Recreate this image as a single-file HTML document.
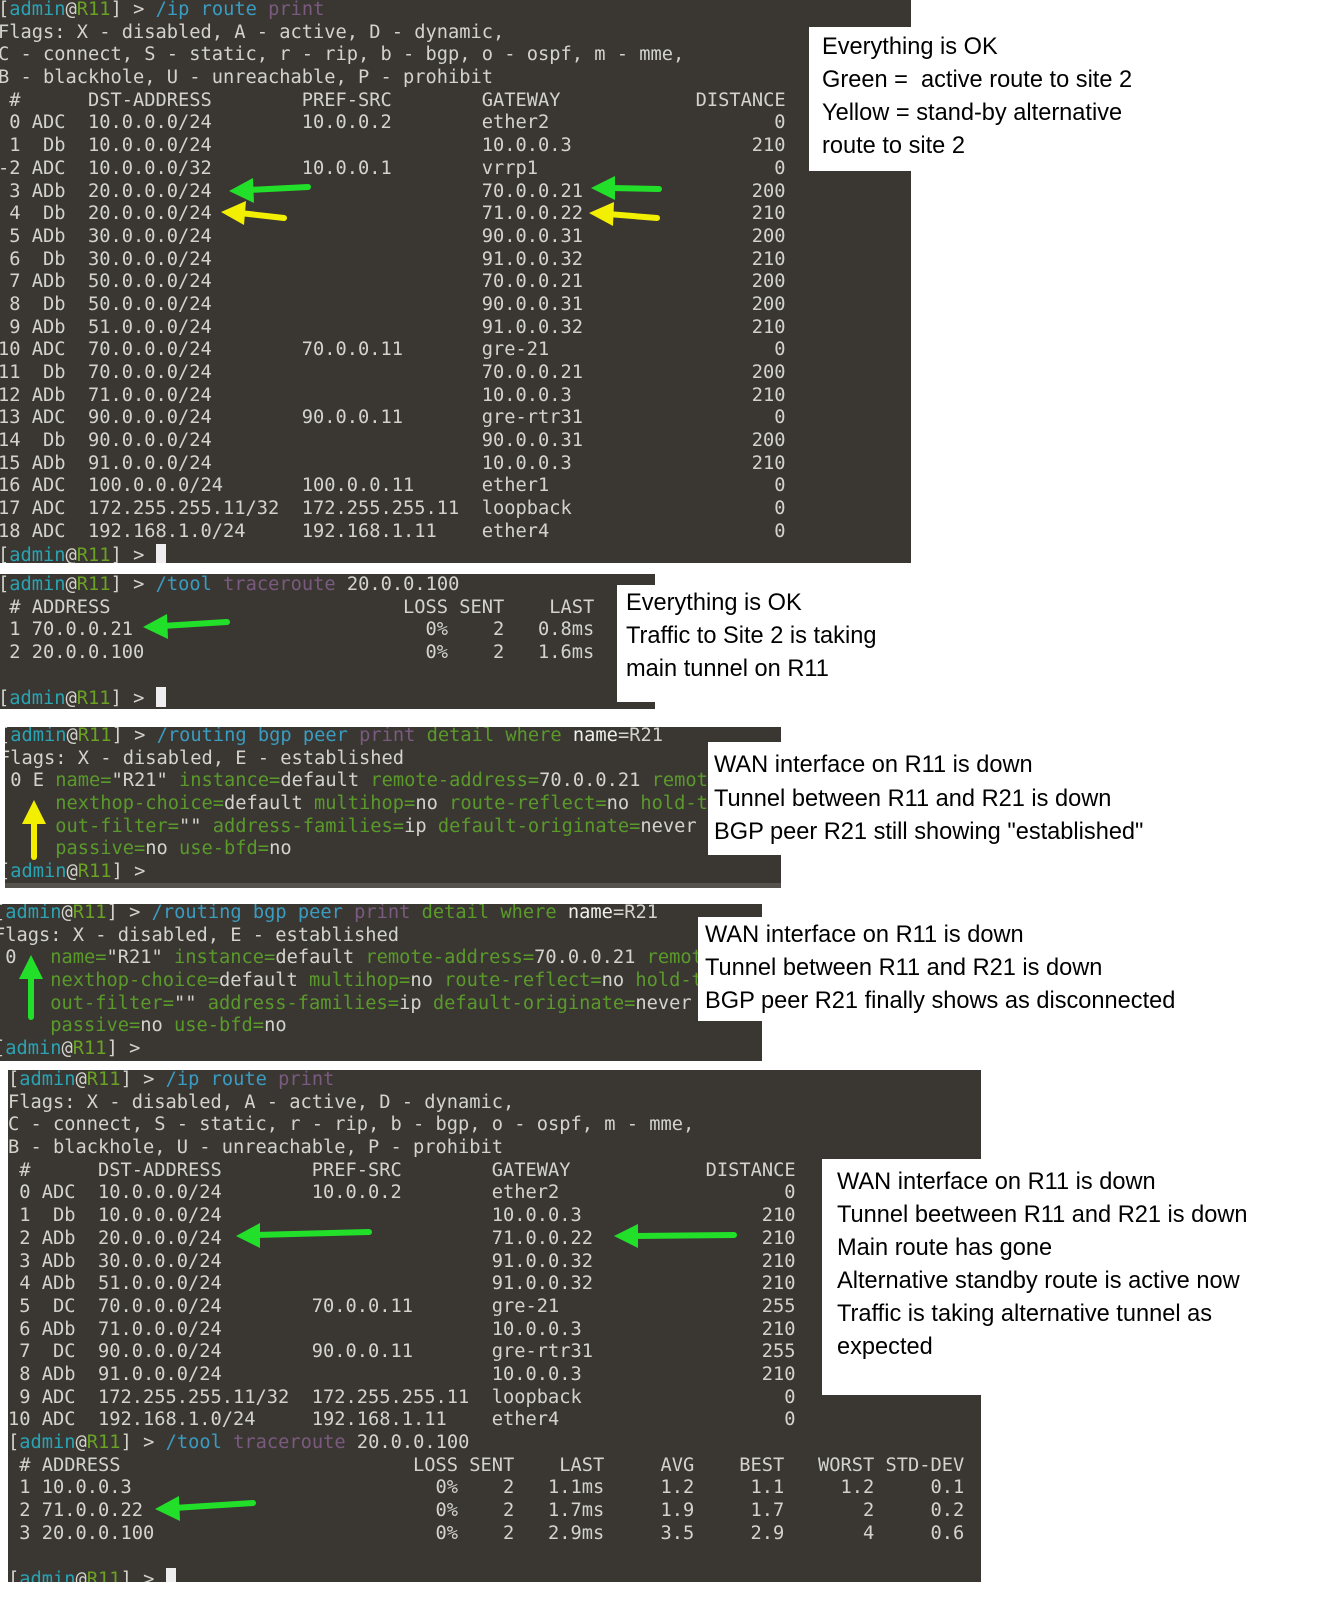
<!DOCTYPE html>
<html><head><meta charset="utf-8">
<style>
*{margin:0;padding:0;box-sizing:border-box}
html,body{width:1324px;height:1619px;background:#fff;overflow:hidden;position:relative}
.p{position:absolute;background:#3a3733;overflow:hidden}
.t{position:absolute;white-space:normal;font-family:"DejaVu Sans Mono","Liberation Mono",monospace;font-size:18.7px;line-height:22.7px;color:#d3d3cc}
.t div{height:22.7px;white-space:pre}
.t i{font-style:normal;display:inline-block;white-space:pre}
.a{width:2ch;text-align:right}.b{width:3ch;text-align:right}
.d{width:19ch}.q{width:16ch}.g{width:19ch}.n{width:8ch;text-align:right}
.ad{width:33ch}.l4{width:4ch;text-align:right}.s5{width:5ch;text-align:right}
.c{color:#2aa3b3}.r{color:#6aa222}.cm{color:#3a9cc0}.pu{color:#7a5a7e}.k{color:#5a9a2a}.w{color:#f0f0ea}
.cur{display:inline-block;width:10px;height:20px;background:#eee;vertical-align:-3px}
.box{position:absolute;background:#fff;font-family:"Liberation Sans",Arial,sans-serif;font-size:23.6px;color:#000}
.box div{position:absolute;left:0;white-space:nowrap}
</style></head><body>

<div class="p" style="left:0;top:0;width:911px;height:563px">
<div class="t" style="left:-2px;top:-1px">
<div>[<span class="c">admin</span>@<span class="r">R11</span>] &gt; <span class="cm">/ip route</span> <span class="pu">print</span></div>
<div>Flags: X - disabled, A - active, D - dynamic,</div>
<div>C - connect, S - static, r - rip, b - bgp, o - ospf, m - mme,</div>
<div>B - blackhole, U - unreachable, P - prohibit</div>
<div><i class="a">#</i> <i class="b"></i>  <i class="d">DST-ADDRESS</i><i class="q">PREF-SRC</i><i class="g">GATEWAY</i><i class="n">DISTANCE</i></div>
<div><i class="a">0</i> <i class="b">ADC</i>  <i class="d">10.0.0.0/24</i><i class="q">10.0.0.2</i><i class="g">ether2</i><i class="n">0</i></div>
<div><i class="a">1</i> <i class="b">Db</i>  <i class="d">10.0.0.0/24</i><i class="q"></i><i class="g">10.0.0.3</i><i class="n">210</i></div>
<div><i class="a">-2</i> <i class="b">ADC</i>  <i class="d">10.0.0.0/32</i><i class="q">10.0.0.1</i><i class="g">vrrp1</i><i class="n">0</i></div>
<div><i class="a">3</i> <i class="b">ADb</i>  <i class="d">20.0.0.0/24</i><i class="q"></i><i class="g">70.0.0.21</i><i class="n">200</i></div>
<div><i class="a">4</i> <i class="b">Db</i>  <i class="d">20.0.0.0/24</i><i class="q"></i><i class="g">71.0.0.22</i><i class="n">210</i></div>
<div><i class="a">5</i> <i class="b">ADb</i>  <i class="d">30.0.0.0/24</i><i class="q"></i><i class="g">90.0.0.31</i><i class="n">200</i></div>
<div><i class="a">6</i> <i class="b">Db</i>  <i class="d">30.0.0.0/24</i><i class="q"></i><i class="g">91.0.0.32</i><i class="n">210</i></div>
<div><i class="a">7</i> <i class="b">ADb</i>  <i class="d">50.0.0.0/24</i><i class="q"></i><i class="g">70.0.0.21</i><i class="n">200</i></div>
<div><i class="a">8</i> <i class="b">Db</i>  <i class="d">50.0.0.0/24</i><i class="q"></i><i class="g">90.0.0.31</i><i class="n">200</i></div>
<div><i class="a">9</i> <i class="b">ADb</i>  <i class="d">51.0.0.0/24</i><i class="q"></i><i class="g">91.0.0.32</i><i class="n">210</i></div>
<div><i class="a">10</i> <i class="b">ADC</i>  <i class="d">70.0.0.0/24</i><i class="q">70.0.0.11</i><i class="g">gre-21</i><i class="n">0</i></div>
<div><i class="a">11</i> <i class="b">Db</i>  <i class="d">70.0.0.0/24</i><i class="q"></i><i class="g">70.0.0.21</i><i class="n">200</i></div>
<div><i class="a">12</i> <i class="b">ADb</i>  <i class="d">71.0.0.0/24</i><i class="q"></i><i class="g">10.0.0.3</i><i class="n">210</i></div>
<div><i class="a">13</i> <i class="b">ADC</i>  <i class="d">90.0.0.0/24</i><i class="q">90.0.0.11</i><i class="g">gre-rtr31</i><i class="n">0</i></div>
<div><i class="a">14</i> <i class="b">Db</i>  <i class="d">90.0.0.0/24</i><i class="q"></i><i class="g">90.0.0.31</i><i class="n">200</i></div>
<div><i class="a">15</i> <i class="b">ADb</i>  <i class="d">91.0.0.0/24</i><i class="q"></i><i class="g">10.0.0.3</i><i class="n">210</i></div>
<div><i class="a">16</i> <i class="b">ADC</i>  <i class="d">100.0.0.0/24</i><i class="q">100.0.0.11</i><i class="g">ether1</i><i class="n">0</i></div>
<div><i class="a">17</i> <i class="b">ADC</i>  <i class="d">172.255.255.11/32</i><i class="q">172.255.255.11</i><i class="g">loopback</i><i class="n">0</i></div>
<div><i class="a">18</i> <i class="b">ADC</i>  <i class="d">192.168.1.0/24</i><i class="q">192.168.1.11</i><i class="g">ether4</i><i class="n">0</i></div>
<div>[<span class="c">admin</span>@<span class="r">R11</span>] &gt; <span class="cur"></span></div>
</div></div>
<div class="box" style="left:809px;top:27px;width:515px;height:144px">
<div style="left:13px;top:7px">Everything is OK</div>
<div style="left:13px;top:40px">Green =&nbsp; active route to site 2</div>
<div style="left:13px;top:73px">Yellow = stand-by alternative</div>
<div style="left:13px;top:106px">route to site 2</div>
</div>

<div class="p" style="left:0;top:574px;width:655px;height:135px">
<div class="t" style="left:-2px;top:0px">
<div>[<span class="c">admin</span>@<span class="r">R11</span>] &gt; <span class="cm">/tool</span> <span class="pu">traceroute</span> 20.0.0.100</div>
<div><i class="a">#</i> <i class="ad">ADDRESS</i><i class="l4">LOSS</i><i class="s5">SENT</i><i class="n">LAST</i></div>
<div><i class="a">1</i> <i class="ad">70.0.0.21</i><i class="l4">0%</i><i class="s5">2</i><i class="n">0.8ms</i></div>
<div><i class="a">2</i> <i class="ad">20.0.0.100</i><i class="l4">0%</i><i class="s5">2</i><i class="n">1.6ms</i></div>
<div></div>
<div>[<span class="c">admin</span>@<span class="r">R11</span>] &gt; <span class="cur"></span></div>
</div></div>
<div class="box" style="left:617px;top:585px;width:300px;height:117px">
<div style="left:9px;top:5px">Everything is OK</div>
<div style="left:9px;top:38px">Traffic to Site 2 is taking</div>
<div style="left:9px;top:71px">main tunnel on R11</div>
</div>

<div class="p" style="left:5px;top:727px;width:776px;height:161px;border-bottom:5px solid #55524d">
<div class="t" style="left:-6px;top:-2px">
<div>[<span class="c">admin</span>@<span class="r">R11</span>] &gt; <span class="cm">/routing bgp peer</span> <span class="pu">print</span> <span class="k">detail where</span> <span class="w">name</span>=R21</div>
<div>Flags: X - disabled, E - established</div>
<div> 0 E <span class="k">name=</span>"R21" <span class="k">instance=</span>default <span class="k">remote-address=</span>70.0.0.21 <span class="k">remote-as=200</span></div>
<div>     <span class="k">nexthop-choice=</span>default <span class="k">multihop=</span>no <span class="k">route-reflect=</span>no <span class="k">hold-time</span></div>
<div>     <span class="k">out-filter=</span>"" <span class="k">address-families=</span>ip <span class="k">default-originate=</span>never</div>
<div>     <span class="k">passive=</span>no <span class="k">use-bfd=</span>no</div>
<div>[<span class="c">admin</span>@<span class="r">R11</span>] &gt; </div>
</div></div>
<div class="box" style="left:708px;top:742px;width:480px;height:113px">
<div style="left:6px;top:10px">WAN interface on R11 is down</div>
<div style="left:6px;top:44px">Tunnel between R11 and R21 is down</div>
<div style="left:6px;top:77px">BGP peer R21 still showing "established"</div>
</div>

<div class="p" style="left:0;top:904px;width:762px;height:157px">
<div class="t" style="left:-6px;top:-2px">
<div>[<span class="c">admin</span>@<span class="r">R11</span>] &gt; <span class="cm">/routing bgp peer</span> <span class="pu">print</span> <span class="k">detail where</span> <span class="w">name</span>=R21</div>
<div>Flags: X - disabled, E - established</div>
<div> 0   <span class="k">name=</span>"R21" <span class="k">instance=</span>default <span class="k">remote-address=</span>70.0.0.21 <span class="k">remote-as=200</span></div>
<div>     <span class="k">nexthop-choice=</span>default <span class="k">multihop=</span>no <span class="k">route-reflect=</span>no <span class="k">hold-time</span></div>
<div>     <span class="k">out-filter=</span>"" <span class="k">address-families=</span>ip <span class="k">default-originate=</span>never</div>
<div>     <span class="k">passive=</span>no <span class="k">use-bfd=</span>no</div>
<div>[<span class="c">admin</span>@<span class="r">R11</span>] &gt; </div>
</div></div>
<div class="box" style="left:698px;top:917px;width:520px;height:104px">
<div style="left:7px;top:5px">WAN interface on R11 is down</div>
<div style="left:7px;top:38px">Tunnel between R11 and R21 is down</div>
<div style="left:7px;top:71px">BGP peer R21 finally shows as disconnected</div>
</div>

<div class="p" style="left:8px;top:1070px;width:973px;height:512px">
<div class="t" style="left:0px;top:-1px">
<div>[<span class="c">admin</span>@<span class="r">R11</span>] &gt; <span class="cm">/ip route</span> <span class="pu">print</span></div>
<div>Flags: X - disabled, A - active, D - dynamic,</div>
<div>C - connect, S - static, r - rip, b - bgp, o - ospf, m - mme,</div>
<div>B - blackhole, U - unreachable, P - prohibit</div>
<div><i class="a">#</i> <i class="b"></i>  <i class="d">DST-ADDRESS</i><i class="q">PREF-SRC</i><i class="g">GATEWAY</i><i class="n">DISTANCE</i></div>
<div><i class="a">0</i> <i class="b">ADC</i>  <i class="d">10.0.0.0/24</i><i class="q">10.0.0.2</i><i class="g">ether2</i><i class="n">0</i></div>
<div><i class="a">1</i> <i class="b">Db</i>  <i class="d">10.0.0.0/24</i><i class="q"></i><i class="g">10.0.0.3</i><i class="n">210</i></div>
<div><i class="a">2</i> <i class="b">ADb</i>  <i class="d">20.0.0.0/24</i><i class="q"></i><i class="g">71.0.0.22</i><i class="n">210</i></div>
<div><i class="a">3</i> <i class="b">ADb</i>  <i class="d">30.0.0.0/24</i><i class="q"></i><i class="g">91.0.0.32</i><i class="n">210</i></div>
<div><i class="a">4</i> <i class="b">ADb</i>  <i class="d">51.0.0.0/24</i><i class="q"></i><i class="g">91.0.0.32</i><i class="n">210</i></div>
<div><i class="a">5</i> <i class="b">DC</i>  <i class="d">70.0.0.0/24</i><i class="q">70.0.0.11</i><i class="g">gre-21</i><i class="n">255</i></div>
<div><i class="a">6</i> <i class="b">ADb</i>  <i class="d">71.0.0.0/24</i><i class="q"></i><i class="g">10.0.0.3</i><i class="n">210</i></div>
<div><i class="a">7</i> <i class="b">DC</i>  <i class="d">90.0.0.0/24</i><i class="q">90.0.0.11</i><i class="g">gre-rtr31</i><i class="n">255</i></div>
<div><i class="a">8</i> <i class="b">ADb</i>  <i class="d">91.0.0.0/24</i><i class="q"></i><i class="g">10.0.0.3</i><i class="n">210</i></div>
<div><i class="a">9</i> <i class="b">ADC</i>  <i class="d">172.255.255.11/32</i><i class="q">172.255.255.11</i><i class="g">loopback</i><i class="n">0</i></div>
<div><i class="a">10</i> <i class="b">ADC</i>  <i class="d">192.168.1.0/24</i><i class="q">192.168.1.11</i><i class="g">ether4</i><i class="n">0</i></div>
<div>[<span class="c">admin</span>@<span class="r">R11</span>] &gt; <span class="cm">/tool</span> <span class="pu">traceroute</span> 20.0.0.100</div>
<div><i class="a">#</i> <i class="ad">ADDRESS</i><i class="l4">LOSS</i><i class="s5">SENT</i><i class="n">LAST</i><i class="n">AVG</i><i class="n">BEST</i><i class="n">WORST</i><i class="n">STD-DEV</i></div>
<div><i class="a">1</i> <i class="ad">10.0.0.3</i><i class="l4">0%</i><i class="s5">2</i><i class="n">1.1ms</i><i class="n">1.2</i><i class="n">1.1</i><i class="n">1.2</i><i class="n">0.1</i></div>
<div><i class="a">2</i> <i class="ad">71.0.0.22</i><i class="l4">0%</i><i class="s5">2</i><i class="n">1.7ms</i><i class="n">1.9</i><i class="n">1.7</i><i class="n">2</i><i class="n">0.2</i></div>
<div><i class="a">3</i> <i class="ad">20.0.0.100</i><i class="l4">0%</i><i class="s5">2</i><i class="n">2.9ms</i><i class="n">3.5</i><i class="n">2.9</i><i class="n">4</i><i class="n">0.6</i></div>
<div></div>
<div>[<span class="c">admin</span>@<span class="r">R11</span>] &gt; <span class="cur"></span></div>
</div></div>
<div class="box" style="left:822px;top:1159px;width:460px;height:236px">
<div style="left:15px;top:10px">WAN interface on R11 is down</div>
<div style="left:15px;top:43px">Tunnel beetween R11 and R21 is down</div>
<div style="left:15px;top:76px">Main route has gone</div>
<div style="left:15px;top:109px">Alternative standby route is active now</div>
<div style="left:15px;top:142px">Traffic is taking alternative tunnel as</div>
<div style="left:15px;top:175px">expected</div>
</div>

<svg width="1324" height="1619" style="position:absolute;left:0;top:0">
<g stroke-linecap="round" stroke-width="6">
<line x1="308" y1="187" x2="248" y2="190" stroke="#22e02a"/>
<polygon points="229,191 253,178 254,203" fill="#22e02a" stroke="none"/>
<line x1="659" y1="189" x2="610" y2="188" stroke="#22e02a"/>
<polygon points="591,188 615,176 615,200" fill="#22e02a" stroke="none"/>
<line x1="284" y1="218" x2="240" y2="213" stroke="#f2f000"/>
<polygon points="221,212 246,201 244,225" fill="#f2f000" stroke="none"/>
<line x1="657" y1="218" x2="608" y2="214" stroke="#f2f000"/>
<polygon points="589,213 614,202 613,226" fill="#f2f000" stroke="none"/>
<line x1="227" y1="622" x2="162" y2="626" stroke="#22e02a"/>
<polygon points="143,627 167,614 168,639" fill="#22e02a" stroke="none"/>
<line x1="34" y1="857" x2="34" y2="818" stroke="#f2f000"/>
<polygon points="34,800 22,824 46,824" fill="#f2f000" stroke="none"/>
<line x1="31" y1="1017" x2="31" y2="973" stroke="#22e02a"/>
<polygon points="31,955 19,979 43,979" fill="#22e02a" stroke="none"/>
<line x1="369" y1="1232" x2="255" y2="1235" stroke="#22e02a"/>
<polygon points="236,1236 260,1223 260,1248" fill="#22e02a" stroke="none"/>
<line x1="734" y1="1235" x2="633" y2="1236" stroke="#22e02a"/>
<polygon points="614,1236 638,1224 638,1248" fill="#22e02a" stroke="none"/>
<line x1="253" y1="1503" x2="174" y2="1508" stroke="#22e02a"/>
<polygon points="155,1509 179,1496 180,1521" fill="#22e02a" stroke="none"/>
</g>
</svg>
</body></html>
